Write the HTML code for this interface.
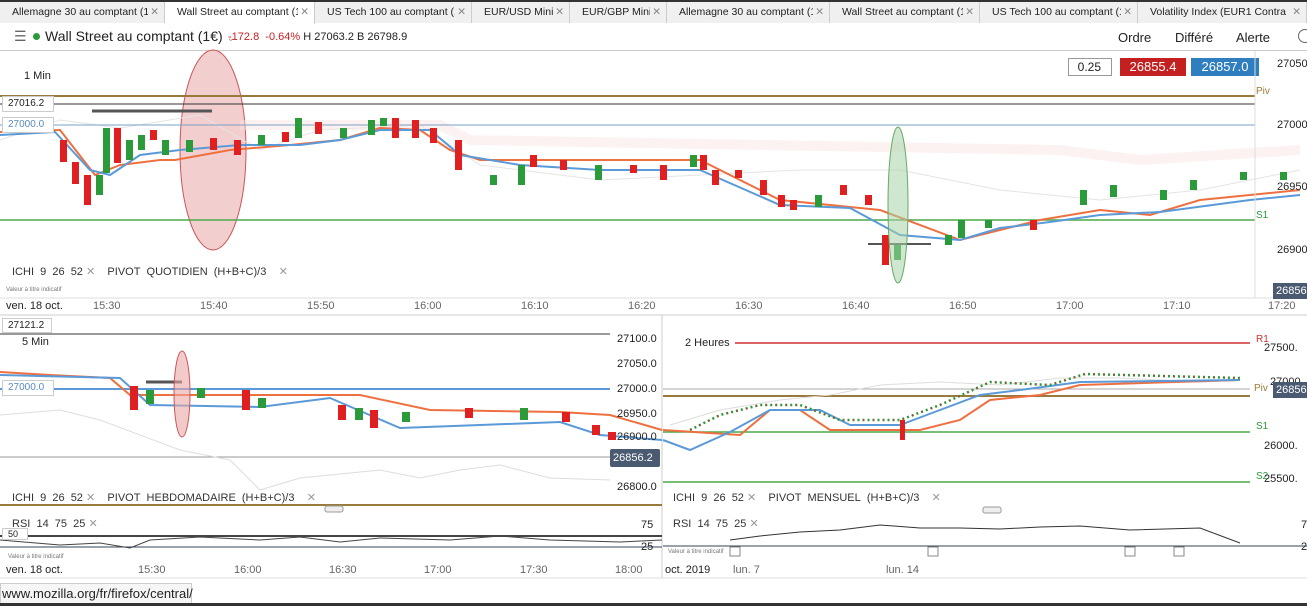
<!DOCTYPE html>
<html><head><meta charset="utf-8"><style>
*{margin:0;padding:0;box-sizing:border-box}
body{width:1307px;height:606px;overflow:hidden;background:#fff;font-family:"Liberation Sans",sans-serif;position:relative;color:#222}
.a{position:absolute;white-space:nowrap}
.tab{position:absolute;top:2px;height:21px;background:#f0f0f0;border-right:1px solid #ccc;font-size:10.5px;line-height:20px;padding-left:12px;color:#222;overflow:hidden}
.tab b{font-weight:normal;color:#888;position:absolute;right:5px;top:0;background:inherit;padding-left:2px}
.s{font-size:11px;color:#333}
.ax{font-size:11px;color:#222}
.t{font-size:11px;color:#666}
</style></head><body>
<div class="a" style="left:0;top:0;width:1307px;height:2px;background:#333"></div>
<div class="a" style="left:0;top:2px;width:1307px;height:21px;background:#f0f0f0;border-bottom:1px solid #ccc"></div>
<div class="tab" style="left:0;width:165px">Allemagne 30 au comptant (1<b>✕</b></div>
<div class="tab" style="left:165px;width:150px;background:#fff;height:22px">Wall Street au comptant (1<b>✕</b></div>
<div class="tab" style="left:315px;width:157px">US Tech 100 au comptant (1<b>✕</b></div>
<div class="tab" style="left:472px;width:98px">EUR/USD Mini<b>✕</b></div>
<div class="tab" style="left:570px;width:97px">EUR/GBP Mini<b>✕</b></div>
<div class="tab" style="left:667px;width:163px">Allemagne 30 au comptant (1<b>✕</b></div>
<div class="tab" style="left:830px;width:150px">Wall Street au comptant (1<b>✕</b></div>
<div class="tab" style="left:980px;width:158px">US Tech 100 au comptant (1<b>✕</b></div>
<div class="tab" style="left:1138px;width:169px">Volatility Index (EUR1 Contra<b>✕</b></div>

<div class="a" style="left:14px;top:28px;font-size:14px;color:#666">☰</div>
<div class="a" style="left:33px;top:33px;width:7px;height:7px;border-radius:50%;background:#2a9a3a"></div>
<div class="a" style="left:45px;top:28px;font-size:14px;color:#222">Wall Street au comptant (1€) <span style="font-size:10px;color:#999">⌄</span></div>
<div class="a" style="left:228px;top:31px;font-size:11px"><span style="color:#c82020">-172.8 &nbsp;-0.64%</span> H 27063.2 B 26798.9</div>
<div class="a" style="left:1118px;top:30px;font-size:13px">Ordre</div>
<div class="a" style="left:1175px;top:30px;font-size:13px">Différé</div>
<div class="a" style="left:1236px;top:30px;font-size:13px">Alerte</div>
<div class="a" style="left:1298px;top:29px;width:14px;height:14px;border:1px solid #666;border-radius:50%"></div>
<div class="a" style="left:0;top:50px;width:1307px;height:1px;background:#ccc"></div>

<div class="a" style="left:24px;top:70px;font-size:11px">1 Min</div>
<div class="a" style="left:1068px;top:58px;width:44px;height:18px;border:1px solid #999;font-size:12px;text-align:right;padding-right:10px;line-height:16px">0.25</div>
<div class="a" style="left:1120px;top:58px;width:66px;height:18px;background:#c42020;color:#fff;font-size:13px;text-align:center;line-height:18px">26855.4</div>
<div class="a" style="left:1191px;top:58px;width:68px;height:18px;background:#2f7ec0;color:#fff;font-size:13px;text-align:center;line-height:18px">26857.0</div>

<svg class="a" style="left:0;top:0" width="1307" height="606">
<ellipse cx="213" cy="150" rx="33" ry="100" fill="#e9a6a6" fill-opacity=".55" stroke="#c55" stroke-width="1"/>
<path d="M0 140 L60 120 L120 128 L200 115 L260 150 L320 130 L420 125 L480 165 L600 180 L700 175 L800 170 L900 170 L1000 190 L1100 200 L1200 190 L1300 170" stroke="#e4e4e4" fill="none"/>
<path d="M240 125 L440 125 L470 140 L1060 150 L1140 160 L1300 150" stroke="#fbe3e3" stroke-width="10" fill="none" opacity=".45"/>
<line x1="0" y1="96" x2="1255" y2="96" stroke="#9a7a3a" stroke-width="2"/>
<line x1="0" y1="104" x2="1255" y2="104" stroke="#333"/>
<line x1="0" y1="125" x2="1255" y2="125" stroke="#7aa0c8"/>
<line x1="0" y1="220" x2="1255" y2="220" stroke="#4aaa4a" stroke-width="1.5"/>
<line x1="92" y1="111" x2="212" y2="111" stroke="#555" stroke-width="3"/>
<line x1="868" y1="244" x2="931" y2="244" stroke="#555" stroke-width="2"/>
<path d="M0 132 L60 130 L95 175 L120 165 L160 160 L175 160 L230 150 L290 145 L340 140 L380 128 L420 130 L450 150 L480 160 L700 160 L780 200 L880 210 L960 240 L1000 230 L1040 220 L1100 210 L1150 215 L1200 200 L1300 190" stroke="#ee7040" stroke-width="2" fill="none"/>
<path d="M0 135 L55 132 L90 170 L110 175 L140 155 L180 150 L240 145 L300 145 L340 140 L380 130 L430 130 L460 155 L520 165 L600 170 L700 170 L780 205 L850 208 L900 235 L960 240 L1000 228 L1050 222 L1100 215 L1160 212 L1250 200 L1300 195" stroke="#5a9ad8" stroke-width="2" fill="none"/>
<g>
<rect x="60" y="140" width="7" height="22" fill="#e02020"/><rect x="72" y="162" width="7" height="22" fill="#e02020"/><rect x="84" y="175" width="7" height="30" fill="#e02020"/><rect x="96" y="175" width="7" height="20" fill="#2a9a3a"/><rect x="103" y="128" width="7" height="45" fill="#2a9a3a"/><rect x="114" y="128" width="7" height="35" fill="#e02020"/><rect x="126" y="140" width="7" height="20" fill="#2a9a3a"/><rect x="138" y="135" width="7" height="15" fill="#2a9a3a"/><rect x="150" y="130" width="7" height="10" fill="#e02020"/><rect x="162" y="140" width="7" height="15" fill="#2a9a3a"/><rect x="186" y="140" width="7" height="12" fill="#2a9a3a"/><rect x="210" y="138" width="7" height="12" fill="#e02020"/><rect x="234" y="140" width="7" height="15" fill="#e02020"/><rect x="258" y="135" width="7" height="10" fill="#2a9a3a"/><rect x="282" y="132" width="7" height="10" fill="#e02020"/><rect x="295" y="118" width="7" height="20" fill="#2a9a3a"/><rect x="315" y="122" width="7" height="12" fill="#e02020"/><rect x="340" y="128" width="7" height="10" fill="#2a9a3a"/><rect x="368" y="120" width="7" height="15" fill="#2a9a3a"/><rect x="380" y="118" width="7" height="8" fill="#2a9a3a"/><rect x="392" y="118" width="7" height="20" fill="#e02020"/><rect x="412" y="120" width="7" height="18" fill="#e02020"/><rect x="430" y="128" width="7" height="15" fill="#e02020"/><rect x="455" y="140" width="7" height="30" fill="#e02020"/><rect x="490" y="175" width="7" height="10" fill="#2a9a3a"/><rect x="518" y="165" width="7" height="20" fill="#2a9a3a"/><rect x="530" y="155" width="7" height="12" fill="#e02020"/><rect x="560" y="160" width="7" height="10" fill="#e02020"/><rect x="595" y="165" width="7" height="15" fill="#2a9a3a"/><rect x="630" y="165" width="7" height="8" fill="#e02020"/><rect x="660" y="165" width="7" height="15" fill="#e02020"/><rect x="690" y="155" width="7" height="12" fill="#2a9a3a"/><rect x="700" y="155" width="7" height="15" fill="#e02020"/><rect x="712" y="170" width="7" height="15" fill="#e02020"/><rect x="735" y="170" width="7" height="8" fill="#e02020"/><rect x="760" y="180" width="7" height="15" fill="#e02020"/><rect x="778" y="195" width="7" height="12" fill="#e02020"/><rect x="790" y="200" width="7" height="10" fill="#e02020"/><rect x="815" y="195" width="7" height="12" fill="#2a9a3a"/><rect x="840" y="185" width="7" height="10" fill="#e02020"/><rect x="865" y="195" width="7" height="10" fill="#e02020"/><rect x="882" y="235" width="7" height="30" fill="#e02020"/><rect x="894" y="245" width="7" height="15" fill="#2a9a3a"/><rect x="945" y="235" width="7" height="10" fill="#2a9a3a"/><rect x="958" y="220" width="7" height="18" fill="#2a9a3a"/><rect x="985" y="220" width="7" height="8" fill="#2a9a3a"/><rect x="1030" y="220" width="7" height="10" fill="#e02020"/><rect x="1080" y="190" width="7" height="15" fill="#2a9a3a"/><rect x="1110" y="185" width="7" height="12" fill="#2a9a3a"/><rect x="1160" y="190" width="7" height="10" fill="#2a9a3a"/><rect x="1190" y="180" width="7" height="10" fill="#2a9a3a"/><rect x="1240" y="172" width="7" height="8" fill="#2a9a3a"/><rect x="1280" y="172" width="7" height="8" fill="#2a9a3a"/>
</g>
<ellipse cx="898" cy="205" rx="10" ry="78" fill="#a8d4a8" fill-opacity=".55" stroke="#6a6"/>
<line x1="1255" y1="51" x2="1255" y2="298" stroke="#ddd"/>
<line x1="0" y1="298" x2="1307" y2="298" stroke="#ddd"/>
<line x1="0" y1="315" x2="1307" y2="315" stroke="#ccc"/>
<line x1="662" y1="315" x2="662" y2="578" stroke="#ccc"/>
<line x1="0" y1="578" x2="1307" y2="578" stroke="#ddd"/>

<line x1="0" y1="334" x2="610" y2="334" stroke="#333"/>
<line x1="0" y1="389" x2="610" y2="389" stroke="#5a9ad8" stroke-width="2"/>
<line x1="0" y1="457" x2="610" y2="457" stroke="#999"/>
<line x1="0" y1="505" x2="662" y2="505" stroke="#9a7a3a" stroke-width="2"/>
<line x1="146" y1="382" x2="182" y2="382" stroke="#555" stroke-width="3"/>
<path d="M0 415 L60 410 L100 420 L180 450 L230 460 L260 490 L300 478 L380 470 L420 478 L460 470 L500 465 L550 478 L610 480" stroke="#ddd" fill="none"/>
<path d="M0 372 L50 375 L110 378 L130 395 L200 395 L360 395 L430 410 L560 412 L610 415 L662 430" stroke="#ee7040" stroke-width="2" fill="none"/>
<path d="M0 375 L120 378 L150 405 L260 407 L330 398 L400 428 L480 425 L560 422 L600 435 L662 440" stroke="#5a9ad8" stroke-width="2" fill="none"/>
<rect x="130" y="386" width="8" height="24" fill="#e02020"/><rect x="146" y="390" width="8" height="14" fill="#2a9a3a"/><rect x="197" y="388" width="8" height="10" fill="#2a9a3a"/><rect x="242" y="390" width="8" height="20" fill="#e02020"/><rect x="258" y="398" width="8" height="10" fill="#2a9a3a"/><rect x="338" y="405" width="8" height="15" fill="#e02020"/><rect x="355" y="408" width="8" height="12" fill="#2a9a3a"/><rect x="370" y="410" width="8" height="18" fill="#e02020"/><rect x="402" y="412" width="8" height="10" fill="#2a9a3a"/><rect x="465" y="408" width="8" height="10" fill="#e02020"/><rect x="520" y="408" width="8" height="12" fill="#2a9a3a"/><rect x="562" y="412" width="8" height="10" fill="#e02020"/><rect x="592" y="425" width="8" height="10" fill="#e02020"/><rect x="608" y="432" width="8" height="8" fill="#e02020"/>
<ellipse cx="182" cy="394" rx="8" ry="43" fill="#e9a6a6" fill-opacity=".6" stroke="#c55"/>
<line x1="0" y1="536" x2="662" y2="536" stroke="#444" stroke-width="2"/>
<line x1="0" y1="547" x2="662" y2="547" stroke="#345"/>
<path d="M0 540 L60 545 L100 543 L130 548 L150 540 L200 537 L260 540 L300 537 L340 542 L380 538 L450 540 L500 536 L550 540 L620 542 L662 540" stroke="#444" fill="none"/>
<rect x="325" y="506" width="18" height="6" rx="2" fill="#eee" stroke="#999"/>

<line x1="735" y1="343" x2="1250" y2="343" stroke="#d03030" stroke-width="1.5"/>
<line x1="663" y1="389" x2="1250" y2="389" stroke="#aaa"/>
<line x1="663" y1="396" x2="1250" y2="396" stroke="#9a7a3a" stroke-width="2"/>
<line x1="663" y1="432" x2="1250" y2="432" stroke="#4aaa4a" stroke-width="1.5"/>
<line x1="663" y1="482" x2="1250" y2="482" stroke="#4aaa4a" stroke-width="1.5"/>
<path d="M670 425 L720 410 L780 400 L830 395 L880 385 L940 382 L1000 385 L1060 378 L1120 378 L1200 382 L1240 380" stroke="#ddd" fill="none"/>
<path d="M663 430 L740 435 L770 410 L800 410 L830 430 L920 430 L960 420 L990 400 L1040 395 L1080 385 L1240 380" stroke="#ee7040" stroke-width="2" fill="none"/>
<path d="M663 440 L690 450 L730 432 L770 410 L820 410 L850 425 L900 425 L940 410 L980 395 L1020 390 L1080 382 L1240 380" stroke="#5a9ad8" stroke-width="2" fill="none"/>
<path d="M690 430 L720 415 L760 405 L800 405 L840 420 L900 420 L940 405 L990 382 L1050 385 L1085 374 L1240 378" stroke="#2a9a3a" stroke-width="2.5" fill="none" stroke-dasharray="2 3"/>
<path d="M690 430 L720 415 L760 405 L800 405 L840 420 L900 420 L940 405 L990 382 L1050 385 L1085 374 L1240 378" stroke="#c33" stroke-width="1" fill="none" stroke-dasharray="2 8"/>
<rect x="900" y="420" width="5" height="20" fill="#e02020"/>
<path d="M730 540 L760 536 L800 532 L840 530 L880 525 L920 528 L960 528 L1000 529 L1040 527 L1080 526 L1130 530 L1200 528 L1240 543" stroke="#333" fill="none"/>
<line x1="663" y1="546" x2="1307" y2="546" stroke="#345"/>
<rect x="983" y="507" width="18" height="6" rx="2" fill="#eee" stroke="#999"/>
<g fill="#fff" stroke="#888"><rect x="730" y="547" width="10" height="9"/><rect x="928" y="547" width="10" height="9"/><rect x="1125" y="547" width="10" height="9"/><rect x="1174" y="547" width="10" height="9"/></g>
</svg>

<div class="a ax" style="left:1277px;top:58px">27050</div>
<div class="a ax" style="left:1277px;top:119px">27000</div>
<div class="a ax" style="left:1277px;top:181px">26950</div>
<div class="a ax" style="left:1277px;top:244px">26900</div>
<div class="a" style="left:1256px;top:86px;font-size:10px;color:#9a7a3a">Piv</div>
<div class="a" style="left:1256px;top:210px;font-size:10px;color:#2a9a3a">S1</div>
<div class="a" style="left:1273px;top:283px;width:34px;height:16px;background:#4a5a70;color:#fff;font-size:11px;line-height:16px;padding-left:3px">26856</div>
<div class="a" style="left:2px;top:96px;width:52px;height:16px;background:#fff;border:1px solid #ccc;font-size:10px;line-height:14px;padding-left:5px">27016.2</div>
<div class="a" style="left:2px;top:117px;width:52px;height:16px;background:#fff;border:1px solid #ccc;font-size:10px;line-height:14px;padding-left:5px;color:#5a8ac0">27000.0</div>
<div class="a s" style="left:12px;top:265px">ICHI&nbsp; 9&nbsp; 26&nbsp; 52 <span style="color:#999">✕</span>&nbsp;&nbsp;&nbsp; PIVOT&nbsp; QUOTIDIEN&nbsp; (H+B+C)/3&nbsp;&nbsp;&nbsp; <span style="color:#999">✕</span></div>
<div class="a" style="left:6px;top:287px;font-size:6px;color:#777">Valeur à titre indicatif</div>
<div class="a ax" style="left:6px;top:300px">ven. 18 oct.</div>
<div class="a t" style="left:93px;top:300px">15:30</div>
<div class="a t" style="left:200px;top:300px">15:40</div>
<div class="a t" style="left:307px;top:300px">15:50</div>
<div class="a t" style="left:414px;top:300px">16:00</div>
<div class="a t" style="left:521px;top:300px">16:10</div>
<div class="a t" style="left:628px;top:300px">16:20</div>
<div class="a t" style="left:735px;top:300px">16:30</div>
<div class="a t" style="left:842px;top:300px">16:40</div>
<div class="a t" style="left:949px;top:300px">16:50</div>
<div class="a t" style="left:1056px;top:300px">17:00</div>
<div class="a t" style="left:1163px;top:300px">17:10</div>
<div class="a t" style="left:1268px;top:300px">17:20</div>

<div class="a" style="left:2px;top:318px;width:50px;height:15px;border:1px solid #ccc;font-size:10px;line-height:13px;padding-left:5px">27121.2</div>
<div class="a ax" style="left:22px;top:336px">5 Min</div>
<div class="a ax" style="left:617px;top:333px">27100.0</div>
<div class="a ax" style="left:617px;top:358px">27050.0</div>
<div class="a ax" style="left:617px;top:383px">27000.0</div>
<div class="a ax" style="left:617px;top:408px">26950.0</div>
<div class="a ax" style="left:617px;top:431px">26900.0</div>
<div class="a" style="left:610px;top:449px;width:50px;height:18px;background:#4a5a70;color:#fff;font-size:11px;line-height:18px;padding-left:3px;border-radius:2px">26856.2</div>
<div class="a ax" style="left:617px;top:481px">26800.0</div>
<div class="a" style="left:2px;top:380px;width:52px;height:16px;background:#fff;border:1px solid #ccc;font-size:10px;line-height:14px;padding-left:5px;color:#5a8ac0">27000.0</div>
<div class="a s" style="left:12px;top:491px">ICHI&nbsp; 9&nbsp; 26&nbsp; 52 <span style="color:#999">✕</span>&nbsp;&nbsp;&nbsp; PIVOT&nbsp; HEBDOMADAIRE&nbsp; (H+B+C)/3&nbsp;&nbsp;&nbsp; <span style="color:#999">✕</span></div>
<div class="a s" style="left:12px;top:517px">RSI&nbsp; 14&nbsp; 75&nbsp; 25 <span style="color:#999">✕</span></div>
<div class="a" style="left:2px;top:528px;width:26px;height:12px;border:1px solid #ccc;background:#fff;font-size:9px;line-height:10px;padding-left:5px">50</div>
<div class="a ax" style="left:641px;top:519px">75</div>
<div class="a ax" style="left:641px;top:541px">25</div>
<div class="a" style="left:8px;top:554px;font-size:6px;color:#777">Valeur à titre indicatif</div>
<div class="a ax" style="left:6px;top:564px">ven. 18 oct.</div>
<div class="a t" style="left:138px;top:564px">15:30</div>
<div class="a t" style="left:234px;top:564px">16:00</div>
<div class="a t" style="left:329px;top:564px">16:30</div>
<div class="a t" style="left:424px;top:564px">17:00</div>
<div class="a t" style="left:520px;top:564px">17:30</div>
<div class="a t" style="left:615px;top:564px">18:00</div>

<div class="a ax" style="left:685px;top:337px">2 Heures</div>
<div class="a" style="left:1256px;top:334px;font-size:10px;color:#d03030">R1</div>
<div class="a ax" style="left:1264px;top:342px">27500.</div>
<div class="a ax" style="left:1270px;top:376px">27000</div>
<div class="a" style="left:1254px;top:383px;font-size:10px;color:#9a7a3a">Piv</div>
<div class="a" style="left:1273px;top:382px;width:34px;height:16px;background:#4a5a70;color:#fff;font-size:11px;line-height:16px;padding-left:3px">26856.</div>
<div class="a" style="left:1256px;top:421px;font-size:10px;color:#2a9a3a">S1</div>
<div class="a ax" style="left:1264px;top:440px">26000.</div>
<div class="a" style="left:1256px;top:471px;font-size:10px;color:#2a9a3a">S2</div>
<div class="a ax" style="left:1264px;top:473px">25500.</div>
<div class="a s" style="left:673px;top:491px">ICHI&nbsp; 9&nbsp; 26&nbsp; 52 <span style="color:#999">✕</span>&nbsp;&nbsp;&nbsp; PIVOT&nbsp; MENSUEL&nbsp; (H+B+C)/3&nbsp;&nbsp;&nbsp; <span style="color:#999">✕</span></div>
<div class="a s" style="left:673px;top:517px">RSI&nbsp; 14&nbsp; 75&nbsp; 25 <span style="color:#999">✕</span></div>
<div class="a ax" style="left:1301px;top:519px">75</div>
<div class="a ax" style="left:1301px;top:541px">25</div>
<div class="a" style="left:668px;top:549px;font-size:6px;color:#777">Valeur à titre indicatif</div>
<div class="a ax" style="left:665px;top:564px">oct. 2019</div>
<div class="a t" style="left:733px;top:564px">lun. 7</div>
<div class="a t" style="left:886px;top:564px">lun. 14</div>

<div class="a" style="left:0;top:583px;width:192px;height:21px;background:#f6f6f6;border:1px solid #ccc;font-size:13px;line-height:20px;padding-left:1px">www.mozilla.org/fr/firefox/central/</div>
<div class="a" style="left:0;top:603px;width:1307px;height:3px;background:#333"></div>
</body></html>
